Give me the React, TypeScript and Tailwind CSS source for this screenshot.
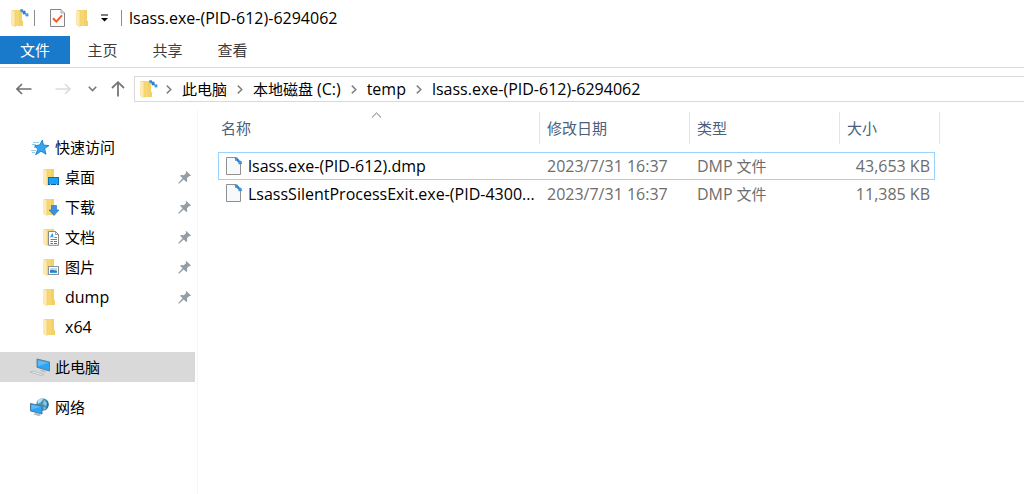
import React from "react";

type IconProps = { className?: string };

const FolderShape = () => (
  <>
    <path d="M1 0H11V10.5L12 11.5V16H1Z" fill="#f7d774" />
    <path d="M8 0H11V10.5L12 11.5V16H8Z" fill="#f2cb62" opacity="0.55" />
    <path d="M0 0L4 1.6V17L0 15Z" fill="#fdeab0" />
    <path d="M4 1.6V17" stroke="#eecb6b" strokeWidth="0.6" />
  </>
);

const RegistryDots = () => (
  <g>
    <path d="M9 0.4L11.6 0L12.4 2.6L9.8 3.2Z" fill="#3b8ed6" />
    <path d="M11 2L14.2 1.6L15 5L12 5.6Z" fill="#2f80cc" />
    <path d="M14 4.4L17.2 4.2L17.6 7.2L14.8 7.6Z" fill="#4a99dc" />
  </g>
);

const Folder = ({ className = "" }: IconProps) => (
  <svg className={`h-[17px] w-[18px] shrink-0 ${className}`} viewBox="0 0 18 17" aria-hidden="true">
    <FolderShape />
  </svg>
);

const DumpFolder = () => (
  <svg className="h-[18px] w-[18px] shrink-0" viewBox="0 0 18 18" aria-hidden="true">
    <g transform="translate(0 1)">
      <FolderShape />
    </g>
    <RegistryDots />
  </svg>
);

const DesktopFolder = () => (
  <svg className="h-[17px] w-[18px] shrink-0" viewBox="0 0 18 17" aria-hidden="true">
    <FolderShape />
    <rect x="5.5" y="8.5" width="10" height="7" fill="#1ba1f5" stroke="#0b6fb8" />
    <path d="M5 15.5H16" stroke="#0a5c9c" />
    <path d="M7 15.5H8M13 15.5H14" stroke="#8fd0ff" />
  </svg>
);

const DownloadFolder = () => (
  <svg className="h-[17px] w-[18px] shrink-0" viewBox="0 0 18 17" aria-hidden="true">
    <FolderShape />
    <path d="M8.5 6.5H13.5V11H16L11 16.4L6 11H8.5Z" fill="#3d91df" stroke="#2a78c2" strokeWidth="0.7" />
  </svg>
);

const DocumentFolder = () => (
  <svg className="h-[17px] w-[18px] shrink-0" viewBox="0 0 18 17" aria-hidden="true">
    <FolderShape />
    <path d="M5.5 2.5H12.5L15.5 5.5V16.3H5.5Z" fill="#fff" stroke="#858b90" />
    <path d="M12.5 2.5V5.5H15.5" fill="none" stroke="#858b90" strokeWidth="0.8" />
    <path d="M7.5 8.5L9.3 4.8L10 8.5M8 7.3H10M11.5 8.5H14M7.5 10.5H14" fill="none" stroke="#2a96df" />
    <path d="M7.5 12.5H10M11 12.5H14M7.5 14.5H10M11 14.5H14" stroke="#3b7fae" />
  </svg>
);

const PictureFolder = () => (
  <svg className="h-[17px] w-[18px] shrink-0" viewBox="0 0 18 17" aria-hidden="true">
    <FolderShape />
    <rect x="5.5" y="7.5" width="10" height="8" fill="#fff" stroke="#8d9296" />
    <rect x="7" y="9" width="7" height="5" fill="#b9dcf5" />
    <path d="M7 11.5C9 10 11 11.5 14 12V14H7Z" fill="#3b7ca8" />
    <path d="M7 13H14V14H7Z" fill="#3aa0e6" />
  </svg>
);

const QuickStar = () => (
  <svg className="h-[17px] w-5 shrink-0" viewBox="0 0 20 17" aria-hidden="true">
    <path d="M3 3.5H9M2 5.5H6M4 8.5H7M1 11.5H6M2 13.5H5" stroke="#8ac6ee" strokeWidth="0.9" />
    <path
      d="M12.4 1L13.4 6L19 6.6L14.6 9.6L16 15.2L11 12.2L5.6 15.8L7.8 10.2L4.5 6.8L9.6 6Z"
      fill="#34a6f0"
      stroke="#1673bd"
      strokeWidth="0.8"
    />
  </svg>
);

const Computer = () => (
  <svg className="h-[18px] w-5 shrink-0" viewBox="0 0 20 18" aria-hidden="true">
    <path d="M7 1L19.5 4V13L7 9.3Z" fill="#2ea5f2" stroke="#60788a" strokeWidth="0.9" />
    <path d="M8 2.2L18.5 4.8L8 8.2Z" fill="#5bbcf8" />
    <path d="M11 11.5L10 13L15 14.5L16 12.8" fill="#b9c0c6" />
    <path d="M0 14L3 13L14 16.5L11 17.5Z" fill="#e9eaeb" stroke="#a9b0b5" strokeWidth="0.7" />
  </svg>
);

const Network = () => (
  <svg className="h-[18px] w-5 shrink-0" viewBox="0 0 20 18" aria-hidden="true">
    <circle cx="12.5" cy="6.5" r="6.3" fill="#4b94b9" />
    <path d="M7.5 3C9 0.5 12 0 13.5 0.6L11 4L8 6Z" fill="#b8dfed" />
    <path d="M14 2L17 5L16 8L13 6ZM13 9L16 10L14.5 11.8Z" fill="#8cc8dd" />
    <path d="M16 1.5C19.8 5 19.3 9.5 15 12.5C17.5 9 17.8 5.5 16 1.5Z" fill="#2b6d93" />
    <path d="M0.5 5.5L12 8V16L0.5 13Z" fill="#2ea5f2" stroke="#47718b" strokeWidth="0.9" />
    <path d="M1.5 6.8L11 8.8L1.5 11.5Z" fill="#5bbcf8" />
    <path d="M6 15L3 16.5L9 18L11 17.2L9 15.8Z" fill="#aeb8bf" />
  </svg>
);

const Pin = () => (
  <svg className="h-[13px] w-[13px] shrink-0" viewBox="0 0 13 13" aria-hidden="true">
    <path
      d="M8.3 0L13 4.5L12.2 5.3L11.2 4.9L9 7.2L9.2 10.2L8.3 11L5.7 8.4L1 12.7L0.2 12L4.6 7.3L2.1 4.8L3 4L5.8 4.2L8.2 2L7.6 0.8Z"
      fill="#929da6"
    />
  </svg>
);

const DumpFile = () => (
  <svg className="h-[19px] w-[17px] shrink-0" viewBox="0 0 17 19" aria-hidden="true">
    <path d="M0.5 0.5H10L14.5 5V17.5H0.5Z" fill="#f8f9fa" stroke="#909090" />
    <path d="M8.6 0.6L11.6 0.4L12.4 3.4L9.4 4Z" fill="#3d91d8" />
    <path d="M12 4L15.4 3.8L16 7L12.6 7.2Z" fill="#3d91d8" />
    <path d="M10.6 2.6L13 2.2L13.6 4.4L11.4 5Z" fill="#2f80cc" />
  </svg>
);

const Properties = () => (
  <svg className="h-[18px] w-[15px] shrink-0" viewBox="0 0 15 18" aria-hidden="true">
    <path d="M0.5 0.5H11L14.5 4V17.5H0.5Z" fill="#fbfbfb" stroke="#858585" />
    <path d="M11 0.5V4H14.5" fill="#e5e5e5" stroke="#9a9a9a" strokeWidth="0.8" />
    <path d="M3 9.3L6.3 12.6L12 6.3" fill="none" stroke="#ee5a24" strokeWidth="2" />
  </svg>
);

const Crumb = () => (
  <svg className="h-[9px] w-[6px] shrink-0" viewBox="0 0 6 9" aria-hidden="true">
    <path d="M0.8 0.6L4.8 4.5L0.8 8.4" fill="none" stroke="#808080" strokeWidth="1.5" />
  </svg>
);

const Arrow = ({ tone }: { tone: string }) => (
  <svg className="h-3 w-4" viewBox="0 0 16 12" aria-hidden="true">
    <path d="M6 1L1 6L6 11M1 6H15.5" fill="none" stroke={tone} strokeWidth="1.6" />
  </svg>
);

type Place = { name: string; icon: React.ReactNode; pinned?: boolean; latin?: boolean };

const places: Place[] = [
  { name: "桌面", icon: <DesktopFolder />, pinned: true },
  { name: "下载", icon: <DownloadFolder />, pinned: true },
  { name: "文档", icon: <DocumentFolder />, pinned: true },
  { name: "图片", icon: <PictureFolder />, pinned: true },
  { name: "dump", icon: <Folder />, pinned: true, latin: true },
  { name: "x64", icon: <Folder />, latin: true },
];

const files = [
  { name: "lsass.exe-(PID-612).dmp", date: "2023/7/31 16:37", size: "43,653 KB", focused: true },
  { name: "LsassSilentProcessExit.exe-(PID-4300...", date: "2023/7/31 16:37", size: "11,385 KB", focused: false },
];

const headings = ["修改日期", "类型"];

export default function App() {
  return (
    <div className="flex min-h-screen flex-col bg-white font-['Open_Sans','Noto_Sans_CJK_SC',sans-serif] text-[15px] leading-5 text-black">
      <header className="flex h-9 items-center pl-[11px]">
        <DumpFolder />
        <span className="ml-[5px] h-4 w-px bg-[#8c8c8c]" />
        <button className="ml-[15px]" aria-label="属性"><Properties /></button>
        <button className="ml-[11px]" aria-label="新建文件夹"><Folder /></button>
        <button className="ml-[7px]" aria-label="自定义快速访问工具栏">
          <svg className="h-2 w-[7px]" viewBox="0 0 7 8" aria-hidden="true">
            <path d="M0 1H7" stroke="#000" />
            <path d="M0 4H7L3.5 7.5Z" fill="#000" />
          </svg>
        </button>
        <span className="ml-[13px] h-4 w-px bg-[#8c8c8c]" />
        <h1 className="ml-[7px] text-base leading-5">lsass.exe-(PID-612)-6294062</h1>
      </header>

      <nav className="flex h-8 items-start border-b border-[#dadbdc] text-[#3c3c3c]" aria-label="功能区">
        <button className="h-7 w-[70px] bg-[#1979ca] text-white">文件</button>
        <button className="h-7 w-[65px]">主页</button>
        <button className="h-7 w-[65px]">共享</button>
        <button className="h-7 w-[65px]">查看</button>
      </nav>

      <div className="flex h-[42px] items-center">
        <div className="flex w-[134px] shrink-0 items-center pl-4">
          <button aria-label="后退"><Arrow tone="#6f6f6f" /></button>
          <button className="ml-[23px] rotate-180" aria-label="前进" disabled><Arrow tone="#dcdcdc" /></button>
          <button className="ml-[17px]" aria-label="最近浏览的位置">
            <svg className="h-[6px] w-[9px]" viewBox="0 0 9 6" aria-hidden="true">
              <path d="M0.8 0.8L4.5 4.5L8.2 0.8" fill="none" stroke="#777" strokeWidth="1.6" />
            </svg>
          </button>
          <button className="ml-[14px]" aria-label="上移">
            <svg className="h-4 w-[14px]" viewBox="0 0 14 16" aria-hidden="true">
              <path d="M1 7L7 1.2L13 7M7 1.2V15.5" fill="none" stroke="#777" strokeWidth="1.8" />
            </svg>
          </button>
        </div>
        <div className="flex h-[26px] min-w-0 flex-1 items-center border border-r-0 border-[#d9d9d9] pl-[5px] whitespace-nowrap">
          <DumpFolder />
          <nav className="ml-2 flex items-center gap-[10px]" aria-label="地址">
            <Crumb />
            <a href="#pc">此电脑</a>
            <Crumb />
            <a href="#c">本地磁盘 <span className="text-base leading-5">(C:)</span></a>
            <Crumb />
            <a href="#temp" className="text-base leading-5">temp</a>
            <Crumb />
            <a href="#dump" className="text-base leading-5">lsass.exe-(PID-612)-6294062</a>
          </nav>
        </div>
      </div>

      <div className="flex flex-1">
        <aside className="w-[198px] shrink-0 border-r border-[#f5f5f5] pt-[22px] pr-0.5">
          <a href="#quick" className="flex h-[30px] items-center gap-[5px] pl-[30px]">
            <QuickStar />
            快速访问
          </a>
          <ul>
            {places.map((p) => (
              <li key={p.name}>
                <a href={"#" + p.name} className="flex h-[30px] items-center pr-1 pl-[43px]">
                  {p.icon}
                  <span className={p.latin ? "ml-1 flex-1 text-base leading-5" : "ml-1 flex-1"}>{p.name}</span>
                  {p.pinned && <Pin />}
                </a>
              </li>
            ))}
          </ul>
          <a href="#pc" className="mt-[10px] flex h-[30px] items-center gap-[5px] bg-[#d9d9d9] pl-[30px]">
            <Computer />
            此电脑
          </a>
          <a href="#network" className="mt-[10px] flex h-[30px] items-center gap-[5px] pl-[30px]">
            <Network />
            网络
          </a>
        </aside>

        <main className="min-w-0 flex-1 pt-0.5 pl-5">
          <table className="w-[722px] table-fixed border-separate border-spacing-0 text-left whitespace-nowrap">
            <colgroup>
              <col className="w-[322px]" />
              <col className="w-[150px]" />
              <col className="w-[150px]" />
              <col className="w-[95px]" />
              <col className="w-[5px]" />
            </colgroup>
            <thead className="text-[#4c607a]">
              <tr>
                <th className="p-0 pb-2 font-normal" aria-sort="ascending">
                  <button className="relative flex h-8 w-full items-center border-r border-[#e5e5e5] pl-[3px]">
                    名称
                    <svg className="absolute top-0 left-[153px] h-[6px] w-[11px]" viewBox="0 0 11 6" aria-hidden="true">
                      <path d="M1 5.4L5.5 1L10 5.4" fill="none" stroke="#6d6d6d" />
                    </svg>
                  </button>
                </th>
                {headings.map((h) => (
                  <th key={h} className="p-0 pb-2 font-normal">
                    <button className="flex h-8 w-full items-center border-r border-[#e5e5e5] pl-[7px]">{h}</button>
                  </th>
                ))}
                <th colSpan={2} className="p-0 pb-2 font-normal">
                  <button className="flex h-8 w-full items-center border-r border-[#e5e5e5] pl-[7px]">大小</button>
                </th>
              </tr>
            </thead>
            <tbody className="text-[#6d6d6d]">
              {files.map((f) => {
                const edge = f.focused ? "h-7 border-y border-[#99d1ff] p-0" : "h-[27px] border-transparent p-0";
                return (
                  <tr key={f.name}>
                    <td className={`${edge} border-l`}>
                      <div className="flex items-center gap-[5px] pl-[7px] text-base leading-5 text-black">
                        <DumpFile />
                        {f.name}
                      </div>
                    </td>
                    <td className={`${edge} pl-[7px] text-base leading-5`}>{f.date}</td>
                    <td className={`${edge} pl-[7px]`}><span className="text-base leading-5">DMP</span> 文件</td>
                    <td className={`${edge} border-r pr-1 text-right text-base leading-5`}>{f.size}</td>
                    <td className="p-0" />
                  </tr>
                );
              })}
            </tbody>
          </table>
        </main>
      </div>
    </div>
  );
}
